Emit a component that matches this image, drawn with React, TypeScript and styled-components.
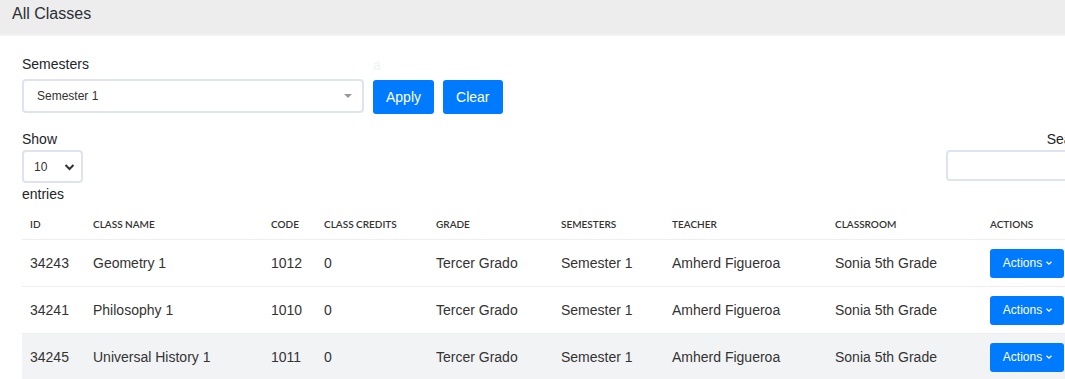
import React from 'react';
import styled, { createGlobalStyle } from 'styled-components';

const GlobalStyle = createGlobalStyle`
  body {
    margin: 0;
    background: #fff;
    font-family: Arial, "Liberation Sans", sans-serif;
    color: #212529;
    overflow: hidden;
  }
`;

const Page = styled.div`
  width: 1065px;
  height: 379px;
  overflow: hidden;
`;

const TitleBar = styled.div`
  height: 36px;
  background: #ededed;
  border-bottom: 2px solid #f3f3f3;
  padding: 5px 12px 0;
  box-sizing: border-box;
  font-size: 16px;
  color: #2a2f35;
`;

const Content = styled.div`
  padding: 20px 0 0 22px;
`;

const FilterRow = styled.div`
  display: flex;
  align-items: flex-end;
  gap: 9px;
`;

const Field = styled.div`
  display: flex;
  flex-direction: column;
  gap: 7px;
`;

const Label = styled.label<{ faint?: boolean }>`
  font-size: 14px;
  line-height: 16px;
  color: ${(p) => (p.faint ? '#eef3fa' : '#212529')};
`;

const SelectBox = styled.div<{ w: number; h: number }>`
  width: ${(p) => p.w}px;
  height: ${(p) => p.h}px;
  box-sizing: border-box;
  border: 2px solid #dfe3ed;
  border-radius: 4px;
  display: flex;
  align-items: center;
  justify-content: space-between;
  padding: 0 10px 0 13px;
  font-size: 12px;
  color: #333;
`;

const Caret = styled.span`
  width: 0;
  height: 0;
  border-left: 4px solid transparent;
  border-right: 4px solid transparent;
  border-top: 4px solid #999;
`;

const Button = styled.button`
  background: #007bff;
  color: #fff;
  border: none;
  border-radius: 3px;
  font-family: Arial, "Liberation Sans", sans-serif;
  font-size: 14px;
  height: 34px;
  padding: 0 13px;
  margin-bottom: -1px;
`;

const ToolsRow = styled.div`
  display: flex;
  justify-content: space-between;
  margin-top: 18px;
`;

const ShowBlock = styled.div`
  display: flex;
  flex-direction: column;
  font-size: 14px;
  line-height: 16px;
  gap: 1px;
`;

const SmallSelect = styled(SelectBox)`
  margin: 2px 0 2px;
  padding: 0 6px 0 10px;
  font-size: 12px;
`;

const SearchBlock = styled.div`
  display: flex;
  flex-direction: column;
  align-items: flex-end;
  font-size: 14px;
  line-height: 16px;
  gap: 3px;
  margin-right: -30px;
  width: 149px;
  overflow: hidden;
`;

const SearchInput = styled.div`
  width: 140px;
  height: 31px;
  box-sizing: border-box;
  border: 2px solid #dfe3ed;
  border-radius: 4px;
  align-self: flex-start;
`;

const Table = styled.table`
  border-collapse: collapse;
  margin-top: 7px;
  width: 1080px;
  table-layout: fixed;
`;

const Th = styled.th`
  text-align: left;
  font-family: Lato, "Liberation Sans", sans-serif;
  font-size: 10px;
  font-weight: 600;
  color: #333;
  padding: 0 8px;
  height: 30px;
  border-bottom: 1px solid #eeeeee;
  white-space: nowrap;
`;

const Tr = styled.tr<{ shaded?: boolean }>`
  background: ${(p) => (p.shaded ? '#f2f3f5' : '#fff')};
`;

const Td = styled.td`
  font-size: 14px;
  color: #333;
  padding: 0 8px;
  height: 46px;
  border-bottom: 1px solid #eeeeee;
  white-space: nowrap;
`;

const ActionBtn = styled.button`
  background: #007bff;
  color: #fff;
  border: none;
  border-radius: 3px;
  font-family: Arial, "Liberation Sans", sans-serif;
  font-size: 12px;
  height: 29px;
  width: 74px;
  padding: 0 0 0 2px;
  display: flex;
  align-items: center;
  justify-content: center;
  gap: 3px;
`;

const cols = [
  { label: 'ID', w: 63 },
  { label: 'CLASS NAME', w: 178 },
  { label: 'CODE', w: 53 },
  { label: 'CLASS CREDITS', w: 112 },
  { label: 'GRADE', w: 125 },
  { label: 'SEMESTERS', w: 111 },
  { label: 'TEACHER', w: 163 },
  { label: 'CLASSROOM', w: 155 },
  { label: 'ACTIONS', w: 120 },
];

const rows = [
  { id: '34243', name: 'Geometry 1', code: '1012' },
  { id: '34241', name: 'Philosophy 1', code: '1010' },
  { id: '34245', name: 'Universal History 1', code: '1011' },
];

const Chevron = () => (
  <svg width="8" height="6" viewBox="0 0 8 6">
    <path d="M1.5 1.8 L4 4.2 L6.5 1.8" stroke="#fff" strokeWidth="1.3" fill="none" />
  </svg>
);

const App = () => {
  return (
    <Page>
      <GlobalStyle />
      <TitleBar>All Classes</TitleBar>
      <Content>
        <FilterRow>
          <Field>
            <Label>Semesters</Label>
            <SelectBox w={342} h={34}>
              Semester 1
              <Caret />
            </SelectBox>
          </Field>
          <Field>
            <Label faint>a</Label>
            <Button>Apply</Button>
          </Field>
          <Button>Clear</Button>
        </FilterRow>
        <ToolsRow>
          <ShowBlock>
            Show
            <SmallSelect w={61} h={33}>
              10
              <svg width="11" height="8" viewBox="0 0 11 8">
                <path d="M1.5 2 L5.5 6 L9.5 2" stroke="#333" strokeWidth="2" fill="none" />
              </svg>
            </SmallSelect>
            entries
          </ShowBlock>
          <SearchBlock>
            <span>Search:</span>
            <SearchInput />
          </SearchBlock>
        </ToolsRow>
        <Table>
          <colgroup>
            {cols.map((c) => (
              <col key={c.label} style={{ width: c.w }} />
            ))}
          </colgroup>
          <thead>
            <tr>
              {cols.map((c) => (
                <Th key={c.label}>{c.label}</Th>
              ))}
            </tr>
          </thead>
          <tbody>
            {rows.map((r, i) => (
              <Tr key={r.id} shaded={i === 2}>
                <Td>{r.id}</Td>
                <Td>{r.name}</Td>
                <Td>{r.code}</Td>
                <Td>0</Td>
                <Td>Tercer Grado</Td>
                <Td>Semester 1</Td>
                <Td>Amherd Figueroa</Td>
                <Td>Sonia 5th Grade</Td>
                <Td>
                  <ActionBtn>
                    Actions <Chevron />
                  </ActionBtn>
                </Td>
              </Tr>
            ))}
          </tbody>
        </Table>
      </Content>
    </Page>
  );
};

export default App;
